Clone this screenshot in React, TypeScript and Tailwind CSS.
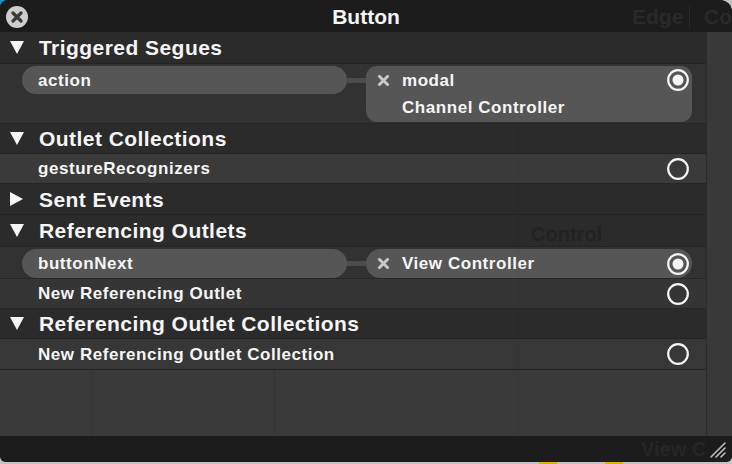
import type { ReactNode } from 'react';

const font = { fontFamily: '"Liberation Sans", Arial, sans-serif' };

function Tri({ open }: { open: boolean }) {
  return open ? (
    <svg width="14" height="13" viewBox="0 0 14 13" className="shrink-0">
      <path d="M0 0 H14 L7 13 Z" fill="#f5f5f5" />
    </svg>
  ) : (
    <svg width="14" height="14" viewBox="0 0 14 14" className="shrink-0">
      <path d="M0 0 L13 7 L0 14 Z" fill="#f5f5f5" />
    </svg>
  );
}

function Radio({ filled }: { filled?: boolean }) {
  return (
    <svg width="22" height="22" viewBox="0 0 22 22" className="shrink-0">
      <circle cx="11" cy="11" r="9.8" fill="none" stroke="#f5f5f5" strokeWidth="2.2" />
      {filled && <circle cx="11" cy="11" r="5.5" fill="#f5f5f5" />}
    </svg>
  );
}

function SmallX() {
  return (
    <svg width="11" height="11" viewBox="0 0 11 11" className="shrink-0">
      <path d="M1.5 1.5 L9.5 9.5 M9.5 1.5 L1.5 9.5" stroke="#c9c9c9" strokeWidth="3" strokeLinecap="round" />
    </svg>
  );
}

function Header({ title, open = true, h }: { title: string; open?: boolean; h: string }) {
  return (
    <div className={`${h} flex items-center gap-[15px] pl-[10px] bg-[#2b2b2b] border-b border-[#232323]`}>
      <Tri open={open} />
      <span className="text-[21px] font-bold tracking-[0.45px] text-[#f5f5f5] leading-none">{title}</span>
    </div>
  );
}

function Row({ label, h, bg }: { label: string; h: string; bg: string }) {
  return (
    <div className={`${h} ${bg} flex items-center justify-between pl-[38px] pr-[17px] border-b border-[#262626]`}>
      <span className="text-[17px] font-bold tracking-[0.55px] text-[#f5f5f5] leading-none">{label}</span>
      <Radio />
    </div>
  );
}

function Connection({ source, h, pillH, children }: { source: string; h: string; pillH: string; children: ReactNode }) {
  return (
    <div className={`${h} bg-[#323232] flex items-start pl-[22px] pt-[2px] border-b border-[#262626]`}>
      <div className={`w-[325px] ${pillH} rounded-full bg-[#565656] flex items-center pl-4`}>
        <span className="text-[17px] font-bold tracking-[0.55px] text-[#f5f5f5] leading-none">{source}</span>
      </div>
      <div className="w-[19px] h-[5px] mt-[12px] bg-[#4b4b4b]" />
      {children}
    </div>
  );
}

export default function App() {
  return (
    <div className="relative w-[732px] h-[464px] bg-[#c3c3c3] overflow-hidden" style={font}>
      <div className="absolute top-0 left-0 w-3 h-4 bg-[#1d8fd0]" />
      <div className="absolute left-[539px] top-[458px] w-[18px] h-[6px] bg-[#d9b400]" />
      <div className="absolute left-[605px] top-[458px] w-[18px] h-[6px] bg-[#d9b400]" />

      <div className="relative h-[462px] flex flex-col rounded-tl-[8px] rounded-tr-[12px] rounded-b-[6px] overflow-hidden bg-[#333]">
        {/* title bar */}
        <div className="relative h-[32px] shrink-0 bg-[#1c1c1c] flex items-center justify-center">
          <div className="absolute left-[6px] top-[6px] w-[22px] h-[22px] rounded-full bg-[#cdcdcd] flex items-center justify-center">
            <svg width="12" height="12" viewBox="0 0 12 12">
              <path d="M2 2 L10 10 M10 2 L2 10" stroke="#3a3a3a" strokeWidth="3.2" strokeLinecap="round" />
            </svg>
          </div>
          <span className="absolute left-[632px] top-[6px] text-[21px] font-bold text-[#292929] leading-none">Edge</span>
          <div className="absolute left-[689px] top-[5px] w-px h-[24px] bg-[#2a2a2a]" />
          <span className="absolute left-[704px] top-[6px] text-[21px] font-bold text-[#292929] leading-none">Co</span>
          <span className="relative text-[21px] font-bold text-[#f5f5f5] leading-none">Button</span>
        </div>

        {/* body */}
        <div className="relative flex flex-1 min-h-0">
          <div className="w-[706px] flex flex-col">
            <Header title="Triggered Segues" h="h-[32px]" />
            <Connection source="action" h="h-[60px]" pillH="h-[28px]">
              <div className="relative w-[326px] h-[56px] rounded-[11px] bg-[#565656] pl-3 pt-[4px]">
                <div className="flex items-center gap-[13px] h-[20px]">
                  <SmallX />
                  <span className="text-[17px] font-bold tracking-[0.55px] text-[#f5f5f5] leading-none">modal</span>
                </div>
                <div className="pl-6 mt-[9px] text-[17px] font-bold tracking-[0.55px] text-[#f5f5f5] leading-none">Channel Controller</div>
                <div className="absolute right-[3px] top-[3px]">
                  <Radio filled />
                </div>
              </div>
            </Connection>
            <Header title="Outlet Collections" h="h-[30px]" />
            <Row label="gestureRecognizers" h="h-[30px]" bg="bg-[#3a3a3a]" />
            <Header title="Sent Events" open={false} h="h-[31px]" />
            <Header title="Referencing Outlets" h="h-[32px]" />
            <Connection source="buttonNext" h="h-[32px]" pillH="h-[29px]">
              <div className="w-[326px] h-[29px] rounded-full bg-[#565656] pl-3 pr-[3px] flex items-center">
                <SmallX />
                <span className="ml-[13px] text-[17px] font-bold tracking-[0.55px] text-[#f5f5f5] leading-none">View Controller</span>
                <div className="ml-auto">
                  <Radio filled />
                </div>
              </div>
            </Connection>
            <Row label="New Referencing Outlet" h="h-[30px]" bg="bg-[#353535]" />
            <Header title="Referencing Outlet Collections" h="h-[30px]" />
            <Row label="New Referencing Outlet Collection" h="h-[31px]" bg="bg-[#373737]" />
            <div className="flex-1 bg-[#3a3a3a]" />
          </div>
          <div className="flex-1 bg-[#393939] border-l border-[#2b2b2b]" />
          <span className="absolute left-[531px] top-[192px] text-[20px] font-bold text-[#222] leading-none pointer-events-none">Control</span>
          <div className="absolute left-[91px] top-[338px] bottom-0 w-px bg-black/10 pointer-events-none" />
          <div className="absolute left-[274px] top-[338px] bottom-0 w-px bg-black/10 pointer-events-none" />
          <div className="absolute left-[518px] top-[90px] bottom-0 w-px bg-black/5 pointer-events-none" />
        </div>

        {/* bottom bar */}
        <div className="relative h-[26px] shrink-0 bg-[#1c1c1c]">
          <span className="absolute left-[641px] top-[3px] text-[20px] font-bold text-[#262626] leading-none">View C</span>
          <svg width="18" height="18" viewBox="0 0 18 18" className="absolute right-[6px] top-[4px]">
            <path d="M17 3 L3 17 M17 8 L8 17 M17 13 L13 17" stroke="#bdbdbd" strokeWidth="1.6" strokeLinecap="round" />
          </svg>
        </div>
      </div>
    </div>
  );
}
